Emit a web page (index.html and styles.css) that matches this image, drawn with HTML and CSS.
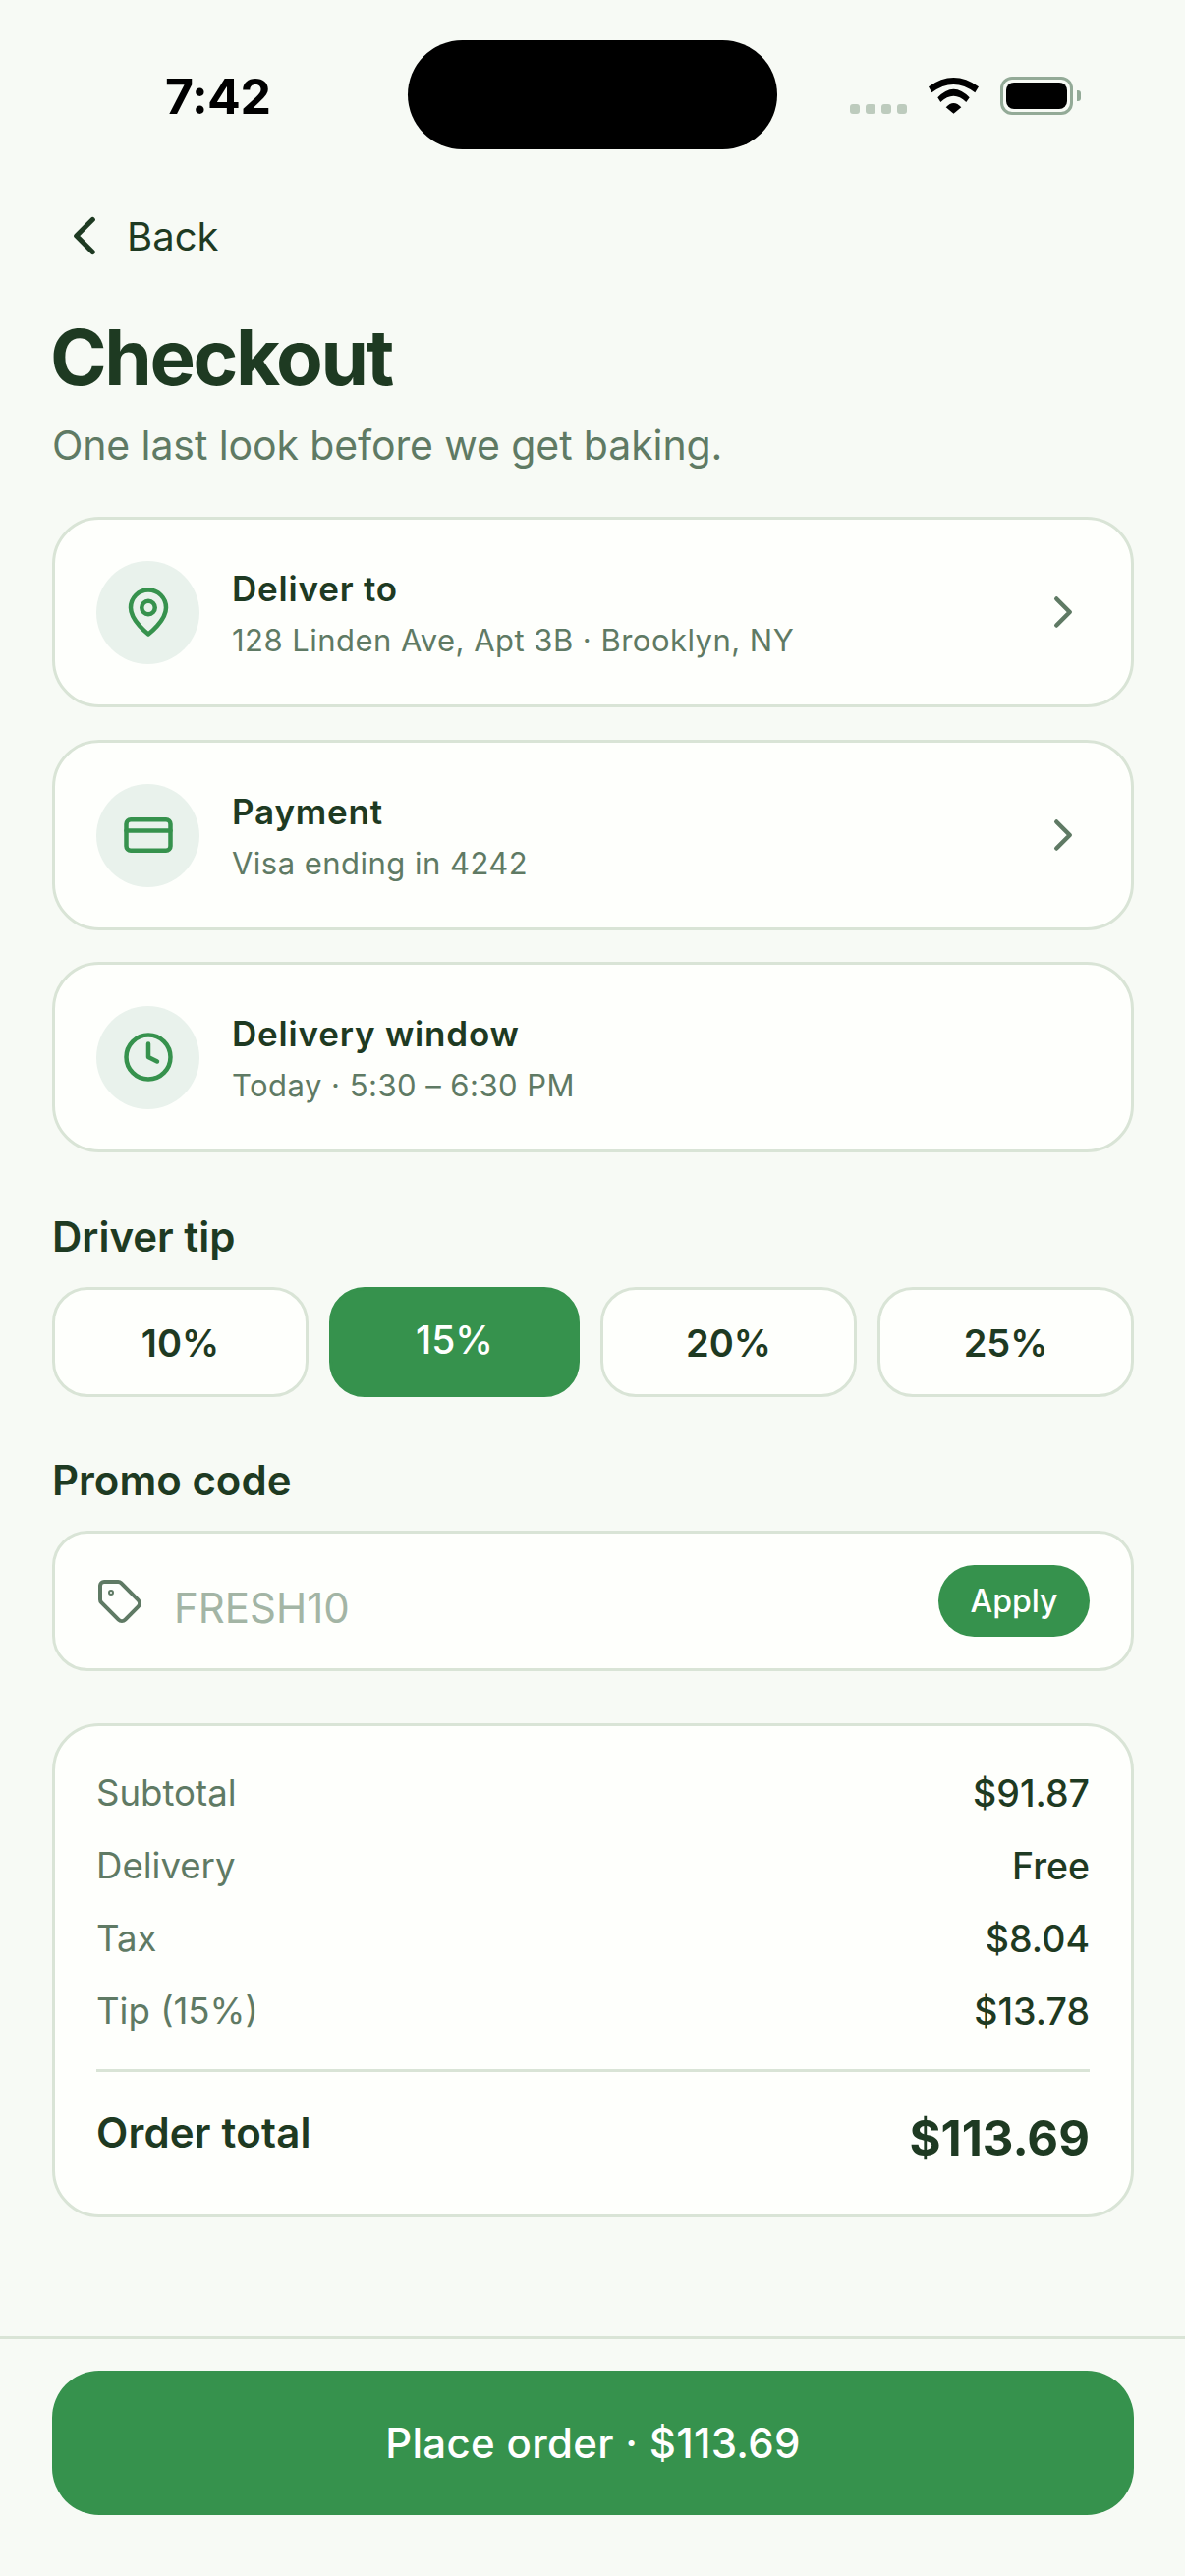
FILE: index.html
```html
<!DOCTYPE html>
<html lang="en">
<head>
    <meta charset="UTF-8">
    <meta name="viewport" content="width=device-width, initial-scale=1.0">
    <title>Checkout</title>
    <link rel="stylesheet" href="styles.css">
</head>
<body>
    <div class="status-bar">
        <span class="time">7:42</span>
        <div class="island"></div>
        <div class="status-icons">
            <div class="signal"><i></i><i></i><i></i><i></i></div>
            <svg class="wifi" viewBox="0 0 51 37">
                <path d="M0 9.3Q25.5 -9.3 51 9.3L47.3 15.3Q25.5 -1.3 3.3 15.3Z"/>
                <path d="M9.3 20.3Q25.5 3 41.7 20.3L38.3 25Q25.5 12.4 12.3 25Z"/>
                <path d="M17.7 30.3Q25.5 21.7 33.3 30.3L25.5 36.7Z"/>
            </svg>
            <div class="battery"><div class="battery-fill"></div></div>
            <div class="battery-nub"></div>
        </div>
    </div>

    <div class="content">
        <a class="back">
            <svg class="back-icon" viewBox="0 0 24 24"><path d="m15 18-6-6 6-6"/></svg>
            <span>Back</span>
        </a>
        <h1>Checkout</h1>
        <p class="subtitle">One last look before we get baking.</p>

        <div class="info-card">
            <div class="info-icon">
                <svg viewBox="0 0 24 24"><path d="M20 10c0 6-8 12-8 12s-8-6-8-12a8 8 0 0 1 16 0Z"/><circle cx="12" cy="10" r="3"/></svg>
            </div>
            <div class="info-text">
                <h3>Deliver to</h3>
                <p>128 Linden Ave, Apt 3B · Brooklyn, NY</p>
            </div>
            <svg class="chevron" viewBox="0 0 24 24"><path d="m9 18 6-6-6-6"/></svg>
        </div>
        <div class="info-card">
            <div class="info-icon">
                <svg viewBox="0 0 24 24"><rect x="2" y="5" width="20" height="14" rx="2"/><path d="M2 10h20"/></svg>
            </div>
            <div class="info-text">
                <h3>Payment</h3>
                <p>Visa ending in 4242</p>
            </div>
            <svg class="chevron" viewBox="0 0 24 24"><path d="m9 18 6-6-6-6"/></svg>
        </div>
        <div class="info-card info-card-last">
            <div class="info-icon">
                <svg viewBox="0 0 24 24"><circle cx="12" cy="12" r="10"/><path d="M12 6v6l4 2"/></svg>
            </div>
            <div class="info-text">
                <h3>Delivery window</h3>
                <p>Today · 5:30 – 6:30 PM</p>
            </div>
        </div>

        <h2 class="tip-title">Driver tip</h2>
        <div class="tips">
            <button class="tip">10%</button>
            <button class="tip tip-active">15%</button>
            <button class="tip">20%</button>
            <button class="tip">25%</button>
        </div>

        <h2 class="promo-title">Promo code</h2>
        <div class="promo">
            <svg class="tag" viewBox="0 0 24 24"><path d="M12.586 2.586A2 2 0 0 0 11.172 2H4a2 2 0 0 0-2 2v7.172a2 2 0 0 0 .586 1.414l8.704 8.704a2.426 2.426 0 0 0 3.42 0l6.58-6.58a2.426 2.426 0 0 0 0-3.42z"/><circle cx="7.5" cy="7.5" r=".5"/></svg>
            <span class="promo-code">FRESH10</span>
            <button class="apply">Apply</button>
        </div>

        <div class="summary">
            <div class="row"><span>Subtotal</span><b>$91.87</b></div>
            <div class="row"><span>Delivery</span><b>Free</b></div>
            <div class="row"><span>Tax</span><b>$8.04</b></div>
            <div class="row"><span>Tip (15%)</span><b>$13.78</b></div>
            <div class="total">
                <span>Order total</span>
                <b>$113.69</b>
            </div>
        </div>
    </div>

    <footer>
        <button class="place-order">Place order · $113.69</button>
    </footer>
</body>
</html>
```

FILE: styles.css
```css
* {
    box-sizing: border-box;
}
body {
    font-family: Inter, 'Liberation Sans', sans-serif;
    margin: 0;
    height: 2622px;
    background: #f7faf5;
    color: #1e3a22;
    display: flex;
    flex-direction: column;
    overflow: hidden;
}
button {
    font-family: inherit;
    border: none;
}
svg {
    fill: none;
    stroke: currentColor;
    stroke-linecap: round;
    stroke-linejoin: round;
    stroke-width: 2;
}

/* status bar */
.status-bar {
    height: 152px;
    padding-top: 41px;
    display: flex;
    flex-shrink: 0;
}
.time {
    width: 415px;
    padding: 34px 0 0 168px;
    font-size: 50px;
    line-height: 46px;
    font-weight: 700;
    letter-spacing: -0.5px;
    color: #000;
}
.island {
    width: 376px;
    height: 111px;
    background: #000;
    border-radius: 56px;
}
.status-icons {
    margin-left: 74px;
    height: 111px;
    display: flex;
}
.signal {
    display: flex;
    gap: 6px;
    margin-top: 65px;
    height: 10px;
}
.signal i {
    width: 10px;
    height: 10px;
    border-radius: 3px;
    background: #bdcbbd;
}
.wifi {
    width: 51px;
    height: 37px;
    margin: 38px 0 0 22px;
    fill: #000;
    stroke: none;
}
.battery {
    width: 74px;
    height: 39px;
    margin: 37px 0 0 22px;
    border: 3px solid #93aa97;
    border-radius: 12px;
    padding: 3px;
}
.battery-fill {
    height: 100%;
    background: #000;
    border-radius: 8px;
}
.battery-nub {
    width: 4px;
    height: 11px;
    margin: 51px 0 0 4px;
    background: #93aa97;
    border-radius: 0 3px 3px 0;
}

/* page */
.content {
    padding: 0 52px 0 53px;
    flex: 1;
}
.back {
    display: flex;
    align-items: center;
    gap: 10px;
    margin-top: 55px;
    height: 66px;
    font-size: 40px;
    color: #1e3a22;
}
.back-icon {
    width: 66px;
    height: 66px;
    stroke-width: 1.9;
}
h1 {
    margin: 44px 0 0 -2px;
    font-size: 78px;
    line-height: 94px;
    font-weight: 700;
    letter-spacing: -2.4px;
}
.subtitle {
    margin: 17px 0 0;
    font-size: 41px;
    line-height: 50px;
    letter-spacing: -0.1px;
    color: #5f7a64;
}

.info-card {
    height: 194px;
    margin-top: 33px;
    padding: 0 42px;
    display: flex;
    align-items: center;
    background: #fefffc;
    border: 3px solid #d9e4d6;
    border-radius: 48px;
}
.subtitle + .info-card {
    margin-top: 48px;
}
.info-card-last {
    margin-top: 32px;
}
.info-icon {
    width: 105px;
    height: 105px;
    border-radius: 50%;
    background: #e9f2ec;
    color: #36924d;
    display: flex;
    align-items: center;
    justify-content: center;
    flex-shrink: 0;
}
.info-icon svg {
    width: 54px;
    height: 54px;
}
.info-text {
    flex: 1;
    margin-left: 33px;
}
.info-text h3 {
    margin: 0;
    padding-top: 3px;
    font-size: 35px;
    line-height: 44px;
    font-weight: 600;
    letter-spacing: 0.8px;
}
.info-text p {
    margin: 11px 0 0;
    font-size: 31px;
    line-height: 40px;
    letter-spacing: 0.47px;
    color: #5f7a64;
}
.chevron {
    width: 54px;
    height: 54px;
    color: #5f7a64;
}

h2 {
    margin: 0;
    font-size: 42px;
    line-height: 50px;
    font-weight: 600;
}
.tip-title {
    margin-top: 61px;
}
.tips {
    display: flex;
    gap: 21px;
    margin-top: 26px;
}
.tip {
    flex: 0 0 261px;
    height: 112px;
    padding-top: 2px;
    background: #fefffc;
    border: 3px solid #d9e4d6;
    border-radius: 36px;
    font-size: 38px;
    font-weight: 600;
    color: #1e3a22;
}
.tip-active {
    flex-basis: 255px;
    background: #36924d;
    border-color: #36924d;
    color: #fff;
    font-size: 39px;
    font-weight: 500;
    padding: 0 0 6px;
}

.promo-title {
    margin-top: 60px;
}
.promo {
    height: 143px;
    margin-top: 26px;
    padding: 0 42px;
    display: flex;
    align-items: center;
    background: #fefffc;
    border: 3px solid #d9e4d6;
    border-radius: 36px;
}
.tag {
    width: 48px;
    height: 48px;
    color: #5f7a64;
    flex-shrink: 0;
}
.promo-code {
    flex: 1;
    margin-left: 31px;
    padding-top: 14px;
    font-size: 42px;
    color: #a3b5a5;
}
.apply {
    width: 154px;
    height: 73px;
    border-radius: 37px;
    background: #36924d;
    color: #fff;
    font-size: 32px;
    font-weight: 500;
}

.summary {
    margin-top: 53px;
    height: 503px;
    padding: 31px 42px 0;
    background: #fefffc;
    border: 3px solid #d9e4d6;
    border-radius: 48px;
}
.row {
    display: flex;
    justify-content: space-between;
    align-items: center;
    height: 74px;
    font-size: 36.6px;
    color: #5f7a64;
}
.row b {
    font-size: 37.5px;
    font-weight: 500;
    color: #1e3a22;
}
.total {
    display: flex;
    justify-content: space-between;
    margin-top: 22px;
    padding-top: 38px;
    border-top: 3px solid #d9e4d6;
    font-size: 42px;
    line-height: 48px;
    font-weight: 600;
    letter-spacing: 0.2px;
}
.total b {
    margin-top: 1px;
    font-size: 49px;
    line-height: 58px;
    font-weight: 700;
    letter-spacing: 0;
}

footer {
    height: 244px;
    padding: 32px 52px 0 53px;
    border-top: 3px solid #d9e4d6;
    flex-shrink: 0;
}
.place-order {
    width: 100%;
    height: 147px;
    background: #36924d;
    color: #fff;
    border-radius: 48px;
    font-size: 42px;
    font-weight: 500;
    letter-spacing: 0.3px;
}
```
